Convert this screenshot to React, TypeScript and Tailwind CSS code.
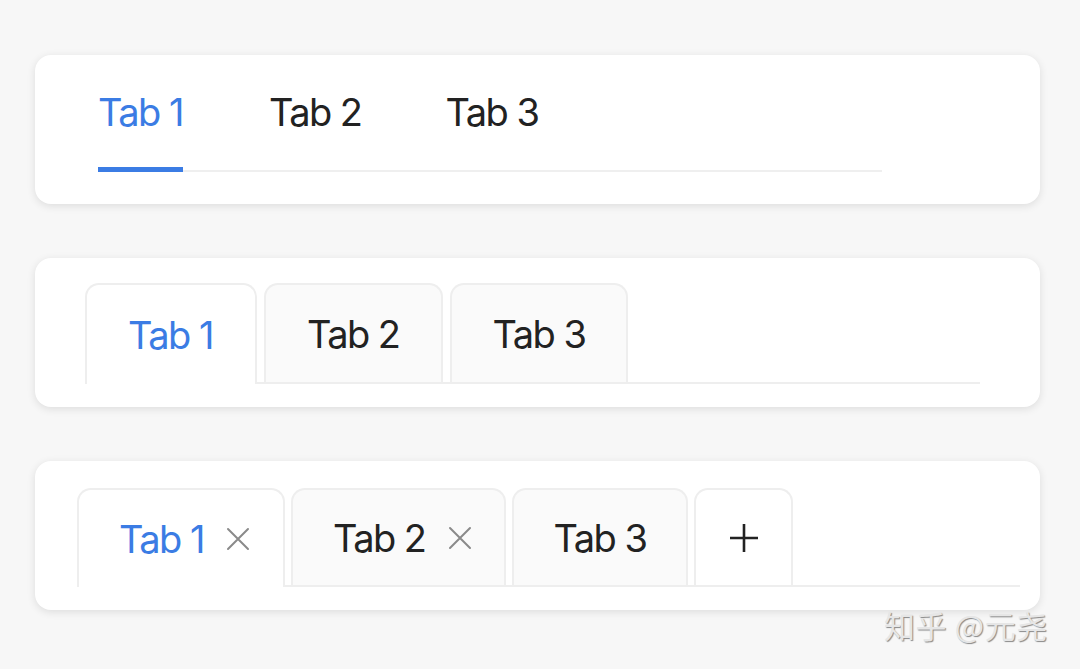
const BLUE = "text-[#3b7ce4]";

function CloseIcon() {
  return (
    <svg viewBox="0 0 24 24" className="ml-[22px] h-[24px] w-[24px] text-[#8a8a8a]" fill="none" stroke="currentColor" strokeWidth={2} strokeLinecap="round">
      <path d="M2 2L22 22M22 2L2 22" />
    </svg>
  );
}

function PlusIcon() {
  return (
    <svg viewBox="0 0 28 28" className="h-[28px] w-[28px] text-[#222222]" fill="none" stroke="currentColor" strokeWidth={2.6}>
      <path d="M14 0V28M0 14H28" />
    </svg>
  );
}

function LineTabs() {
  const tabs = ["Tab 1", "Tab 2", "Tab 3"];
  return (
    <div className="flex h-[149px] flex-col rounded-[16px] bg-white pl-[63px] pt-[35px] shadow-[0_2px_9px_rgba(0,0,0,0.11)]">
      <div className="flex w-[784px] gap-[86px] border-b-2 border-[#efefef]">
        {tabs.map((t, i) => (
          <div
            key={t}
            className={
              i === 0
                ? `-mb-[2px] border-b-[5px] border-[#3b7ce4] pb-[33px] ${BLUE}`
                : `pb-[36px] text-[#222222] ${i === 2 ? "-ml-[2px]" : ""}`
            }
          >
            <span className="block leading-[44px]">{t}</span>
          </div>
        ))}
      </div>
    </div>
  );
}

function CardTabs() {
  const tabs = ["Tab 1", "Tab 2", "Tab 3"];
  return (
    <div className="flex h-[149px] flex-col rounded-[16px] bg-white pl-[50px] pt-[25px] shadow-[0_2px_9px_rgba(0,0,0,0.11)]">
      <div className="flex w-[895px] items-start gap-[7px] border-b-2 border-[#eeeeee]">
        {tabs.map((t, i) => (
          <div
            key={t}
            className={
              i === 0
                ? `-mb-[2px] flex h-[101px] items-center rounded-t-[14px] border-2 border-b-0 border-[#eeeeee] bg-white pl-[41px] pr-[42px] ${BLUE}`
                : "flex h-[99px] items-center rounded-t-[14px] border-2 border-b-0 border-[#eeeeee] bg-[#fafafa] px-[41px] text-[#222222]"
            }
          >
            <span className="leading-[44px]">{t}</span>
          </div>
        ))}
      </div>
    </div>
  );
}

function EditableTabs() {
  const tabs = [
    { label: "Tab 1", closable: true },
    { label: "Tab 2", closable: true },
    { label: "Tab 3", closable: false },
  ];
  return (
    <div className="flex h-[149px] flex-col rounded-[16px] bg-white pl-[42px] pt-[27px] shadow-[0_2px_9px_rgba(0,0,0,0.11)]">
      <div className="flex w-[943px] items-start gap-[6px] border-b-2 border-[#eeeeee]">
        {tabs.map((t, i) => (
          <div
            key={t.label}
            className={
              i === 0
                ? `-mb-[2px] flex h-[99px] items-center rounded-t-[14px] border-2 border-b-0 border-[#eeeeee] bg-white pl-[40px] pr-[33px] ${BLUE}`
                : `flex h-[97px] items-center rounded-t-[14px] border-2 border-b-0 border-[#eeeeee] bg-[#fafafa] ${t.closable ? "pl-[40px] pr-[32px]" : "px-[40px]"} text-[#222222]`
            }
          >
            <span className="leading-[44px]">{t.label}</span>
            {t.closable && <CloseIcon />}
          </div>
        ))}
        <div className="flex h-[97px] w-[99px] items-center justify-center rounded-t-[14px] border-2 border-b-0 border-[#eeeeee] bg-white">
          <PlusIcon />
        </div>
      </div>
    </div>
  );
}

export default function App() {
  return (
    <div
      className="relative h-[669px] w-[1080px] overflow-hidden bg-[#f7f7f7] pl-[35px] pt-[55px] text-[38px] tracking-[-0.04em]"
      style={{ fontFamily: "Inter, 'Noto Sans', sans-serif" }}
    >
      <div className="flex w-[1005px] flex-col gap-[54px]">
        <LineTabs />
        <CardTabs />
        <EditableTabs />
      </div>
      <div
        className="absolute left-[884px] top-[602px] text-[31px] tracking-[0.02em] text-[#e6e6e6] [text-shadow:1px_1px_1px_rgba(0,0,0,0.45)]"
        style={{ fontFamily: "'Noto Sans CJK SC', 'Noto Sans', sans-serif" }}
      >
        知乎 @元尧
      </div>
    </div>
  );
}
